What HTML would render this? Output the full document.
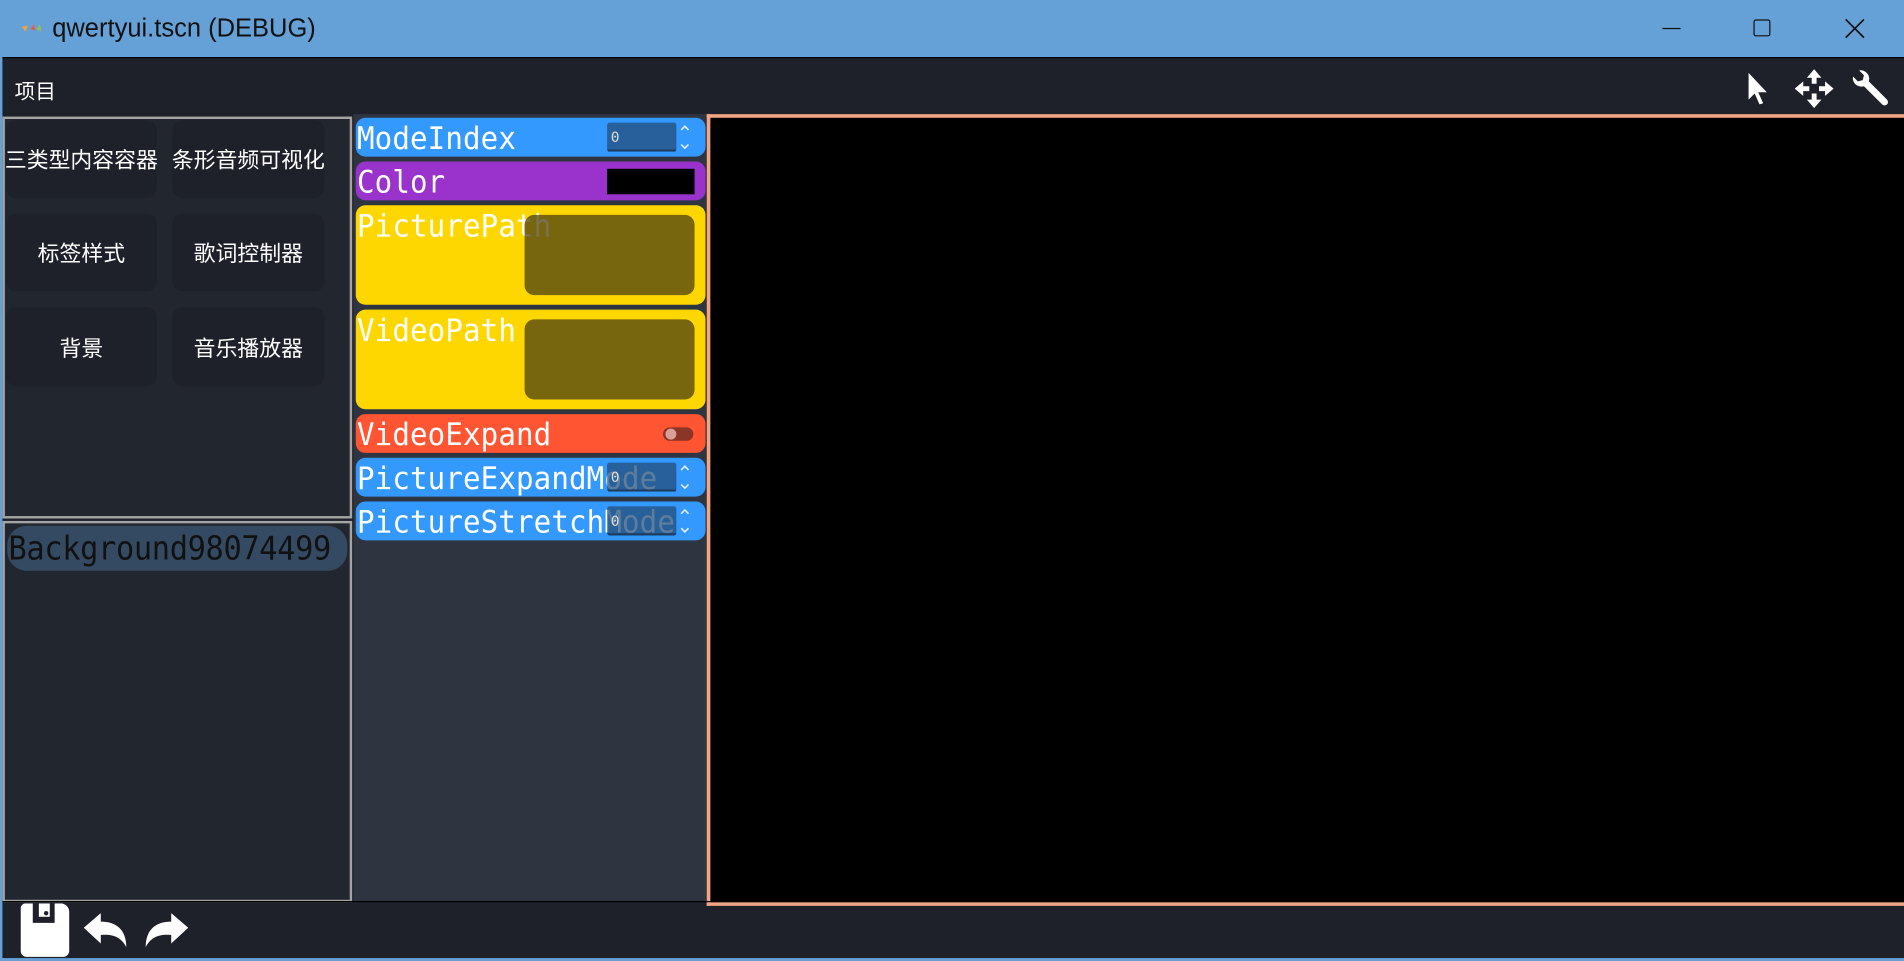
<!DOCTYPE html>
<html><head><meta charset="utf-8"><style>
*{margin:0;padding:0;box-sizing:border-box}
html,body{width:1904px;height:960px;overflow:hidden;background:#65a0d6}
#s{position:absolute;left:0;top:0;width:1568px;height:791px;transform:scale(1.21429);transform-origin:0 0;font-family:"Liberation Sans","Noto Sans CJK SC",sans-serif}
.a{position:absolute}
.cn{color:#fff;font-size:17px;font-family:"Liberation Sans","Noto Sans CJK SC",sans-serif}
.btn{position:absolute;background:#1e2129;border-radius:8px;display:flex;align-items:center;justify-content:center;color:#fff;font-size:18px;white-space:nowrap}
.row{position:absolute;left:293px;width:288px;border-radius:8px;overflow:hidden}
.lab{position:absolute;left:1px;top:1px;line-height:32px;font-family:"DejaVu Sans Mono","Liberation Mono",monospace;font-size:24px;color:#fff;white-space:nowrap;letter-spacing:0.1px;transform:scaleY(1.08);transform-origin:0 50%}
.spin{position:absolute;left:207px;top:4px;width:57px;height:24px;background:rgba(35,74,117,0.72);border-bottom:2px solid #1d3d61;border-radius:2px;color:#ddd;font:12px "DejaVu Sans Mono",monospace;padding:5px 0 0 3px}
.arr{position:absolute;left:266px;top:4px;width:10px;height:24px}
</style></head><body><div id="s">
<div class="a" style="left:0;top:0;width:1568px;height:47px;background:#65a0d6"></div>
<svg class="a" style="left:17px;top:18px" width="18" height="10"><path d="M1 4L4 8L6 3Z" fill="#f0a040"/><path d="M8 6L11 2L12 7Z" fill="#e06040"/><path d="M13 6L16 2L17 8Z" fill="#90c050"/></svg>
<div class="a" style="left:43px;top:12px;font-size:21px;color:#111">qwertyui.tscn (DEBUG)</div>
<div class="a" style="left:1369px;top:23px;width:15px;height:1px;background:#111"></div>
<div class="a" style="left:1444px;top:16px;width:14px;height:14px;border:1.5px solid #111;border-radius:2px"></div>
<svg class="a" style="left:1519px;top:15px" width="17" height="17"><path d="M1 1L16 16M16 1L1 16" stroke="#111" stroke-width="1.4"/></svg>
<div class="a" style="left:2px;top:47px;width:1566px;height:742px;background:#1e2129;border-top:1px solid #000"></div>
<div class="a cn" style="left:12px;top:61px">项目</div>
<svg class="a" style="left:1438px;top:58px" width="22" height="30"><path d="M2 2L2 24L7 19L11 28L14 27L10 18L17 18Z" fill="#fff"/></svg>
<svg class="a" style="left:1477px;top:56px" width="34" height="34" fill="#fff"><path d="M17 1L23 8H19V13H15V8H11Z M17 33L23 26H19V21H15V26H11Z M1 17L8 11V15H13V19H8V23Z M33 17L26 11V15H21V19H26V23Z"/></svg>
<svg class="a" style="left:1523px;top:57px" width="34" height="32"><path d="M3 6 A7 7 0 0 0 12 14 L27 29 A2.5 2.5 0 0 0 31 25 L16 10 A7 7 0 0 0 8 1 L12 5 L11 9 L7 10 Z" fill="#fff"/></svg>
<div class="a" style="left:2px;top:96px;width:288px;height:331px;background:#22262e;border:2px solid #a4a4a4"></div>
<div class="btn" style="left:5px;top:99px;width:124px;height:64px">三类型内容容器</div>
<div class="btn" style="left:142px;top:99px;width:125px;height:64px">条形音频可视化</div>
<div class="btn" style="left:5px;top:176px;width:124px;height:64px">标签样式</div>
<div class="btn" style="left:142px;top:176px;width:125px;height:64px">歌词控制器</div>
<div class="btn" style="left:5px;top:253px;width:124px;height:65px">背景</div>
<div class="btn" style="left:142px;top:253px;width:125px;height:65px">音乐播放器</div>
<div class="a" style="left:2px;top:429px;width:288px;height:314px;background:#22262e;border:2px solid #a4a4a4"></div>
<div class="a" style="left:6px;top:433px;width:280px;height:37px;background:#344a63;border-radius:16px"></div>
<div class="a" style="left:7px;top:434px;font:25px 'DejaVu Sans Mono',monospace;color:#111;letter-spacing:-0.3px;line-height:36px;transform:scaleY(1.08)">Background98074499</div>
<div class="a" style="left:291px;top:94px;width:291px;height:649px;background:#2e3440"></div>
<div class="row" style="top:97px;height:32px;background:#3399ff"><div class="lab">ModeIndex</div><div class="spin">0</div><svg class="arr"><path d="M2 6L5 3L8 6M2 18L5 21L8 18" stroke="#e8f0ff" stroke-width="1.3" fill="none"/></svg></div>
<div class="row" style="top:133px;height:32px;background:#9933cc"><div class="lab">Color</div><div class="a" style="left:207px;top:6px;width:72px;height:21px;background:#000"></div></div>
<div class="row" style="top:169px;height:82px;background:#ffd700"><div class="lab">PicturePath</div><div class="a" style="left:139px;top:8px;width:140px;height:66px;background:rgba(70,60,20,0.73);border-radius:8px"></div></div>
<div class="row" style="top:255px;height:82px;background:#ffd700"><div class="lab">VideoPath</div><div class="a" style="left:139px;top:8px;width:140px;height:66px;background:rgba(70,60,20,0.73);border-radius:8px"></div></div>
<div class="row" style="top:341px;height:32px;background:#ff5533"><div class="lab">VideoExpand</div><div class="a" style="left:253px;top:11px;width:25px;height:11px;background:#8a3525;border-radius:6px"></div><div class="a" style="left:255px;top:12px;width:9px;height:9px;background:#d8a098;border-radius:50%"></div></div>
<div class="row" style="top:377px;height:32px;background:#3399ff"><div class="lab">PictureExpandMode</div><div class="spin">0</div><svg class="arr"><path d="M2 6L5 3L8 6M2 18L5 21L8 18" stroke="#e8f0ff" stroke-width="1.3" fill="none"/></svg></div>
<div class="row" style="top:413px;height:32px;background:#3399ff"><div class="lab">PictureStretchMode</div><div class="spin">0</div><svg class="arr"><path d="M2 6L5 3L8 6M2 18L5 21L8 18" stroke="#e8f0ff" stroke-width="1.3" fill="none"/></svg></div>
<div class="a" style="left:582px;top:94px;width:986px;height:652px;background:#000;border:3px solid #f0a585;border-right:none"></div>
<div class="a" style="left:2px;top:742px;width:1566px;height:1px;background:#000"></div>
<svg class="a" style="left:17px;top:744px" width="42" height="46"><path d="M4 0H10V16H28V0H33A7 7 0 0 1 40 7V39A5 5 0 0 1 35 44H5A5 5 0 0 1 0 39V4A4 4 0 0 1 4 0Z" fill="#fff"/><rect x="15" y="0" width="9" height="11" fill="#fff"/><circle cx="21" cy="8" r="1.8" fill="#1e2129"/></svg>
<svg class="a" style="left:67px;top:750px" width="40" height="34"><path d="M2 14L16 2V9C28 9 37 15 37 30C33 22 26 19 16 20V27Z" fill="#fff"/></svg>
<svg class="a" style="left:117px;top:750px" width="40" height="34"><path d="M38 14L24 2V9C12 9 3 15 3 30C7 22 14 19 24 20V27Z" fill="#fff"/></svg>
</div></body></html>
